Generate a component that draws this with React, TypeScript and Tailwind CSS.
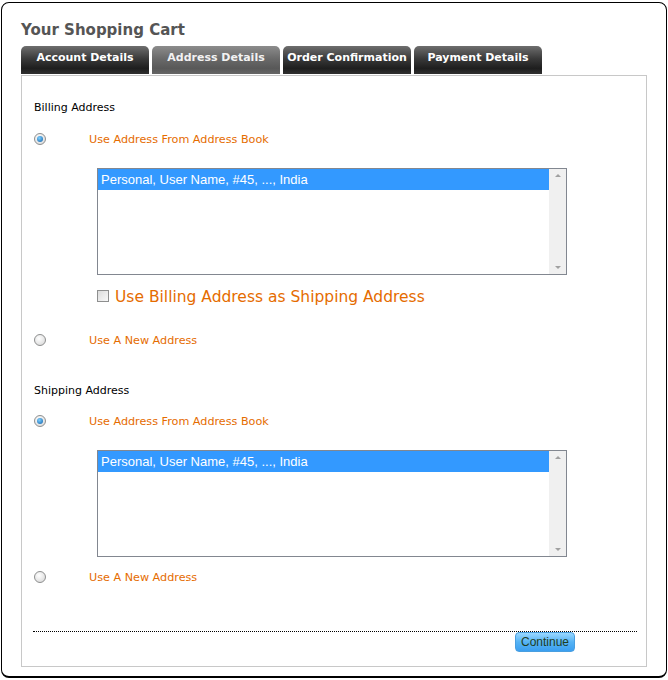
import React from "react";

const tabs = [
  { label: "Account Details", active: false },
  { label: "Address Details", active: true },
  { label: "Order Confirmation", active: false },
  { label: "Payment Details", active: false },
];

function Radio({ checked }: { checked?: boolean }) {
  return (
    <span className="flex h-[12px] w-[12px] items-center justify-center rounded-full border border-[#8e8f8f] bg-[radial-gradient(circle_at_40%_35%,#ffffff,#d4d4d4)]">
      {checked && (
        <span className="h-[6px] w-[6px] rounded-full bg-[radial-gradient(circle_at_40%_35%,#7fd0ff,#0d5ea8)]" />
      )}
    </span>
  );
}

function ListBox() {
  return (
    <div className="ml-[63px] flex h-[107px] w-[470px] border border-[#828790] bg-white">
      <div className="flex-1">
        <div className="flex h-[21px] items-center bg-[#3399ff] pl-[3px] pt-[1px] text-[13px] text-white font-['Liberation_Sans',Arial,sans-serif]">
          Personal, User Name, #45, ..., India
        </div>
      </div>
      <div className="flex w-[17px] flex-col items-center justify-between bg-[#f0f0f0] py-[5px]">
        <span className="h-0 w-0 border-x-[3px] border-b-[3px] border-x-transparent border-b-[#a0a0a0]" />
        <span className="h-0 w-0 border-x-[3px] border-t-[3px] border-x-transparent border-t-[#a0a0a0]" />
      </div>
    </div>
  );
}

function OptionRow({ checked, label, className }: { checked?: boolean; label: string; className: string }) {
  return (
    <div className={`flex h-[21px] items-center ${className}`}>
      <Radio checked={checked} />
      <span className="ml-[43px] pt-[3px] text-[11.2px] text-[#e56c00]">{label}</span>
    </div>
  );
}

export default function App() {
  return (
    <div className="h-[680px] w-[668px] bg-white pl-[1px] pt-[2px] font-['DejaVu_Sans',Verdana,sans-serif]">
      <div className="h-[676px] w-[666px] rounded-[8px] border border-b-2 border-black pl-[19px] pr-[19px]">
        <h1 className="mt-[16px] h-[22px] text-[15px] leading-[22px] font-bold text-[#555]">Your Shopping Cart</h1>

        {/* Tabs */}
        <div className="mt-[5px] flex gap-[3px]">
          {tabs.map((t) => (
            <div
              key={t.label}
              className={
                t.active
                  ? "flex h-[28px] w-[128px] justify-center rounded-t-[5px] bg-[linear-gradient(#8c8c8c,#6a6a6a_45%,#585858_80%,#666)] pt-[4px] text-[11px] font-bold text-[#f2f2f2]"
                  : "flex h-[28px] w-[128px] justify-center rounded-t-[5px] bg-[linear-gradient(#6e6e6e,#3a3a3a_45%,#1e1e1e_80%,#303030)] pt-[4px] text-[11px] font-bold text-white"
              }
            >
              {t.label}
            </div>
          ))}
        </div>

        {/* Content */}
        <div className="mt-[1px] flex h-[592px] w-[626px] flex-col border border-[#c8c8c8] pl-[12px]">
          <div className="mt-[21px] flex h-[20px] items-center pt-[2px] text-[11px] text-black">Billing Address</div>
          <OptionRow checked label="Use Address From Address Book" className="mt-[11px]" />
          <div className="mt-[19px]">
            <ListBox />
          </div>
          <label className="ml-[63px] mt-[11px] flex h-[20px] items-center">
            <span className="h-[12px] w-[12px] border border-[#8e8f8f] bg-[linear-gradient(135deg,#dcdcdc,#f8f8f8)]" />
            <span className="ml-[6px] pt-[3px] text-[15.5px] text-[#e56c00]">Use Billing Address as Shipping Address</span>
          </label>
          <OptionRow label="Use A New Address" className="mt-[23px]" />

          <div className="mt-[30px] flex h-[20px] items-center pt-[2px] text-[11px] text-black">Shipping Address</div>
          <OptionRow checked label="Use Address From Address Book" className="mt-[10px]" />
          <div className="mt-[19px]">
            <ListBox />
          </div>
          <OptionRow label="Use A New Address" className="mt-[9px]" />

          <div className="ml-[-1px] mr-[9px] mt-[44px] border-t border-dotted border-black" />
          <div className="mr-[71px] flex justify-end">
            <button className="h-[20px] w-[60px] rounded-[4px] border border-[#4a9fe0] bg-[linear-gradient(#9ad8ff,#55b3f5_50%,#3b9ff0)] text-[12px] text-[#1f3d1f] font-['Liberation_Sans',Arial,sans-serif]">
              Continue
            </button>
          </div>
        </div>
      </div>
    </div>
  );
}
